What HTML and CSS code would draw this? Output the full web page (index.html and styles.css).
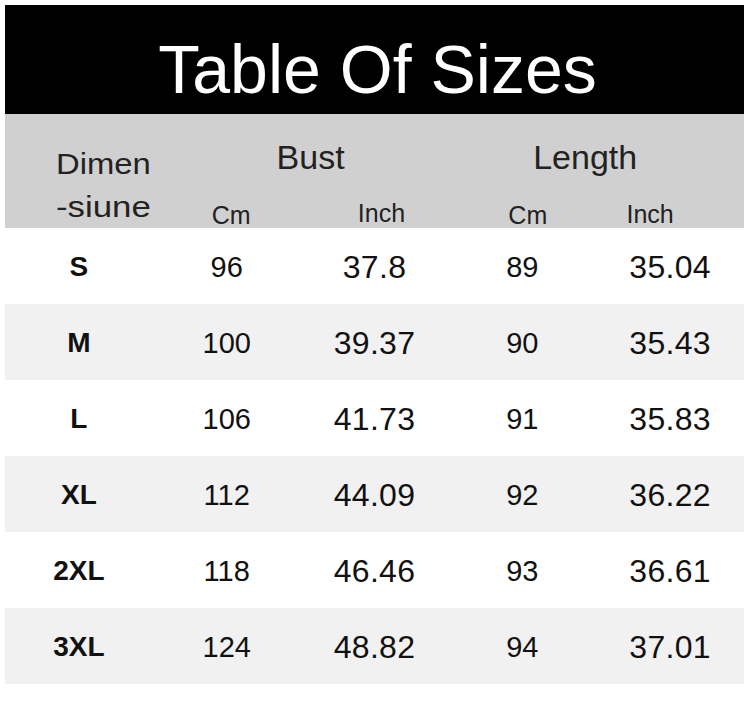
FILE: index.html
```html
<!DOCTYPE html>
<html lang="en">
<head>
<meta charset="utf-8">
<title>Table Of Sizes</title>
<link rel="stylesheet" href="styles.css">
</head>
<body>
<div class="sheet">
  <div class="title">Table Of Sizes</div>
  <div class="head">
    <div class="dim"><span class="stretch">Dimen</span><br><span class="stretch wide">-siune</span></div>
    <div class="group bust">Bust</div>
    <div class="group length">Length</div>
    <div class="unit u-bcm">Cm</div>
    <div class="unit u-bin">Inch</div>
    <div class="unit u-lcm">Cm</div>
    <div class="unit u-lin">Inch</div>
  </div>
  <div class="row"><div class="size">S</div><div class="cm">96</div><div class="in">37.8</div><div class="cm">89</div><div class="in">35.04</div></div>
  <div class="row alt"><div class="size">M</div><div class="cm">100</div><div class="in">39.37</div><div class="cm">90</div><div class="in">35.43</div></div>
  <div class="row"><div class="size">L</div><div class="cm">106</div><div class="in">41.73</div><div class="cm">91</div><div class="in">35.83</div></div>
  <div class="row alt"><div class="size">XL</div><div class="cm">112</div><div class="in">44.09</div><div class="cm">92</div><div class="in">36.22</div></div>
  <div class="row"><div class="size">2XL</div><div class="cm">118</div><div class="in">46.46</div><div class="cm">93</div><div class="in">36.61</div></div>
  <div class="row alt"><div class="size">3XL</div><div class="cm">124</div><div class="in">48.82</div><div class="cm">94</div><div class="in">37.01</div></div>
</div>
</body>
</html>
```

FILE: styles.css
```css
html, body {
  margin: 0;
  padding: 0;
  background: #ffffff;
}
body {
  font-family: "Liberation Sans", Arial, sans-serif;
  color: #111111;
}
.sheet {
  width: 739px;
  margin: 5px 0 0 5px;
}
.title {
  box-sizing: border-box;
  height: 109px;
  padding: 30px 0 0 6px;
  background: #000000;
  color: #ffffff;
  font-size: 68px;
  line-height: 68px;
  text-align: center;
}
.head {
  display: grid;
  grid-template-columns: repeat(5, 1fr);
  grid-template-rows: 89px 25px;
  background: #d1d0d0;
  color: #222222;
}
.dim {
  grid-row: 1 / span 2;
  grid-column: 1;
  padding: 29px 0 0 51px;
  font-size: 29px;
  line-height: 43px;
}
.stretch {
  display: inline-block;
  transform: scaleX(1.13);
  transform-origin: left center;
}
.stretch.wide {
  transform: scaleX(1.2);
}
.group {
  padding-top: 26px;
  font-size: 34px;
  line-height: 34px;
  text-align: center;
}
.bust {
  grid-column: 2 / span 2;
  padding-left: 20px;
}
.length {
  grid-column: 4 / span 2;
  padding-right: 22px;
}
.unit {
  grid-row: 2;
  font-size: 25px;
  line-height: 25px;
  text-align: center;
  white-space: nowrap;
}
.u-bcm { grid-column: 2; padding-left: 9px; }
.u-bin { grid-column: 3; padding-left: 14px; margin-top: -2px; }
.u-lcm { grid-column: 4; padding-left: 11px; }
.u-lin { grid-column: 5; padding-right: 40px; margin-top: -1px; }
.row {
  display: grid;
  grid-template-columns: repeat(5, 1fr);
  box-sizing: border-box;
  height: 76px;
  padding-top: 2px;
  line-height: 74px;
  text-align: center;
  background: #ffffff;
}
.row.alt {
  background: #f1f1f1;
}
.size {
  font-weight: bold;
  font-size: 28px;
}
.cm {
  font-size: 29px;
}
.in {
  font-size: 32px;
  letter-spacing: 0.3px;
}
```
